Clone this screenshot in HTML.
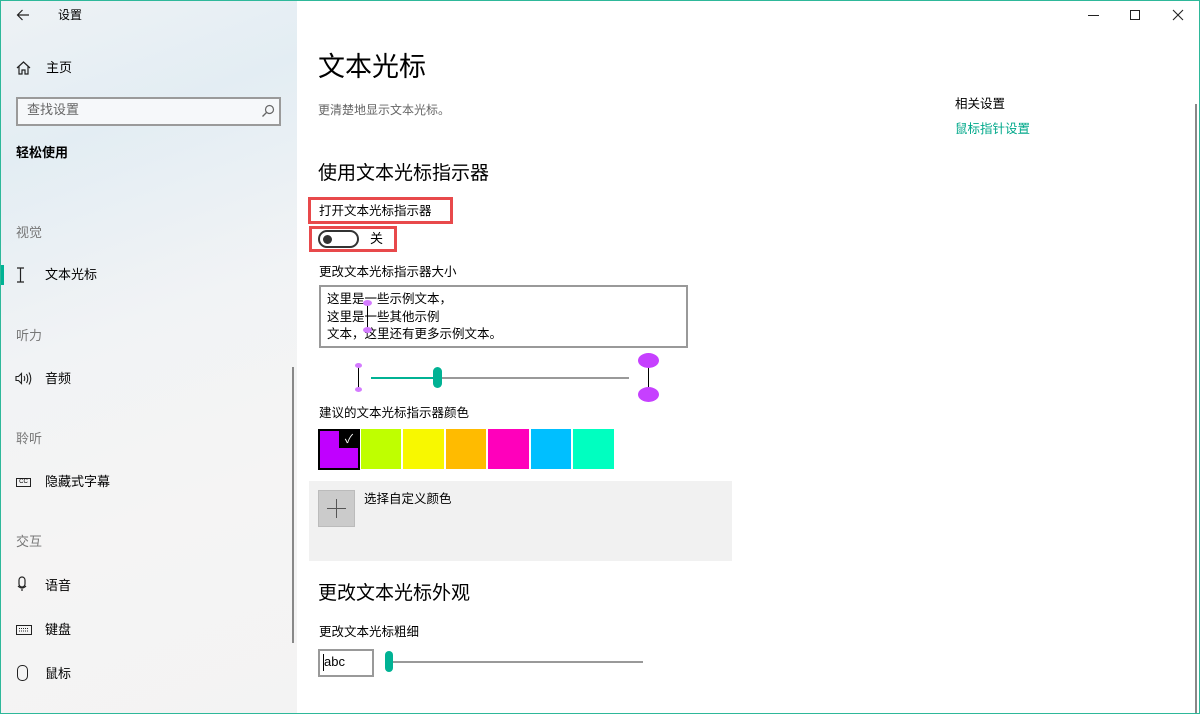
<!DOCTYPE html>
<html><head><meta charset="utf-8"><style>
*{margin:0;padding:0;box-sizing:border-box}
body{width:1200px;height:714px;overflow:hidden;font-family:"Liberation Sans","Noto Sans CJK SC",sans-serif;background:#fff;position:relative;color:#000;line-height:1.15}
.a{position:absolute;white-space:nowrap}
#side{position:absolute;left:0;top:0;width:297px;height:714px;background:linear-gradient(160deg,#eef2f5 0%,#e3edf3 20%,#f1f3f5 45%,#f5f4f4 70%,#f3f3f3 100%)}
.s{font-size:13px}
.g{color:#777;font-size:13px}
.b{border-radius:50%}
</style></head><body>
<div id="side">
<svg class="a" style="left:16px;top:9px" width="14" height="12" viewBox="0 0 14 12"><path d="M13 6H1.5M6.5 1L1.5 6L6.5 11" fill="none" stroke="#222" stroke-width="1.2"/></svg>
<div class="a s" style="left:58px;top:9px;font-size:12px">设置</div>
<svg class="a" style="left:16px;top:61px" width="15" height="14" viewBox="0 0 15 14"><path d="M1 7L7.5 1L14 7M3 5.5V13H6V9H9V13H12V5.5" fill="none" stroke="#222" stroke-width="1.2"/></svg>
<div class="a s" style="left:46px;top:61px">主页</div>
<div class="a" style="left:16px;top:97px;width:265px;height:29px;border:2px solid #9a9a9a;background:#f6f8fa"></div>
<div class="a" style="left:27px;top:103px;font-size:13px;color:#666">查找设置</div>
<svg class="a" style="left:261px;top:104px" width="14" height="14" viewBox="0 0 14 14"><circle cx="8.5" cy="5.5" r="4" fill="none" stroke="#666" stroke-width="1.2"/><path d="M5.5 8.5L1.5 12.5" stroke="#666" stroke-width="1.3"/></svg>
<div class="a s" style="left:16px;top:146px;font-weight:bold">轻松使用</div>
<div class="a g" style="left:16px;top:226px">视觉</div>
<div class="a" style="left:0;top:265px;width:4px;height:20px;background:#00b294"></div>
<svg class="a" style="left:16px;top:267px" width="9" height="16" viewBox="0 0 9 16"><path d="M1 1H8M1 15H8M4.5 1V15" stroke="#222" stroke-width="1.2" fill="none"/></svg>
<div class="a s" style="left:45px;top:268px">文本光标</div>
<div class="a g" style="left:16px;top:329px">听力</div>
<svg class="a" style="left:15px;top:372px" width="17" height="13" viewBox="0 0 17 13"><path d="M1 4.5H3.5L6.5 1.5V11.5L3.5 8.5H1Z" fill="none" stroke="#222" stroke-width="1.1"/><path d="M9 4Q10.5 6.5 9 9M11.5 2Q14 6.5 11.5 11M14 0.5Q17.5 6.5 14 12.5" fill="none" stroke="#222" stroke-width="1.1"/></svg>
<div class="a s" style="left:45px;top:372px">音频</div>
<div class="a g" style="left:16px;top:432px">聆听</div>
<div class="a" style="left:16px;top:478px;width:15px;height:9px;border:1px solid #222;font-size:6px;line-height:7px;text-align:center">CC</div>
<div class="a s" style="left:45px;top:475px">隐藏式字幕</div>
<div class="a g" style="left:16px;top:535px">交互</div>
<svg class="a" style="left:17px;top:576px" width="10" height="16" viewBox="0 0 10 16"><rect x="2" y="1" width="6" height="10" rx="3" fill="none" stroke="#222" stroke-width="1.2"/><path d="M1 10Q5 14 9 10M5 13V15" fill="none" stroke="#222" stroke-width="1.2"/></svg>
<div class="a s" style="left:45px;top:579px">语音</div>
<svg class="a" style="left:16px;top:625px" width="16" height="10" viewBox="0 0 16 10"><rect x="0.5" y="0.5" width="15" height="9" fill="none" stroke="#222"/><path d="M3 3.5H13M3 6H13" stroke="#222" stroke-dasharray="1 1"/></svg>
<div class="a s" style="left:45px;top:623px">键盘</div>
<div class="a" style="left:17px;top:665px;width:11px;height:16px;border:1.3px solid #222;border-radius:5px"></div>
<div class="a s" style="left:45px;top:667px">鼠标</div>
<div class="a" style="left:292px;top:367px;width:2px;height:276px;background:#888"></div>
</div>
<div class="a" style="left:1088px;top:15px;width:11px;height:1px;background:#222"></div>
<div class="a" style="left:1130px;top:10px;width:10px;height:10px;border:1px solid #222"></div>
<svg class="a" style="left:1172px;top:9px" width="12" height="12"><path d="M1 1L11 11M11 1L1 11" stroke="#222" stroke-width="1.1"/></svg>
<div class="a" style="left:1195px;top:104px;width:2px;height:610px;background:#888"></div>
<div class="a" style="left:318px;top:52px;font-size:27px">文本光标</div>
<div class="a" style="left:318px;top:104px;font-size:12px;color:#666">更清楚地显示文本光标。</div>
<div class="a" style="left:318px;top:163px;font-size:19px">使用文本光标指示器</div>
<div class="a" style="left:308px;top:197px;width:145px;height:27px;border:3px solid #e8494b"></div>
<div class="a" style="left:319px;top:204px;font-size:12.5px">打开文本光标指示器</div>
<div class="a" style="left:309px;top:226px;width:88px;height:26px;border:3px solid #e8494b"></div>
<div class="a" style="left:318px;top:230px;width:41px;height:18px;border:2px solid #333;border-radius:10px"></div>
<div class="a b" style="left:323px;top:235px;width:9px;height:9px;background:#333"></div>
<div class="a s" style="left:370px;top:232px">关</div>
<div class="a" style="left:319px;top:265px;font-size:12.5px">更改文本光标指示器大小</div>
<div class="a" style="left:319px;top:285px;width:369px;height:63px;border:2px solid #999"></div>
<div class="a" style="left:327px;top:291px;font-size:12.5px;line-height:17.5px">这里是一些示例文本，<br>这里是一些其他示例<br>文本，这里还有更多示例文本。</div>
<div class="a" style="left:367px;top:303px;width:1px;height:26px;background:#000"></div>
<div class="a b" style="left:363px;top:300px;width:9px;height:6px;background:#d47bff"></div>
<div class="a b" style="left:363px;top:327px;width:9px;height:6px;background:#d47bff"></div>
<div class="a" style="left:358px;top:365px;width:1px;height:25px;background:#000"></div>
<div class="a b" style="left:355px;top:363px;width:7px;height:5px;background:#d47bff"></div>
<div class="a b" style="left:355px;top:387px;width:7px;height:5px;background:#d47bff"></div>
<div class="a" style="left:371px;top:377px;width:66px;height:2px;background:#00b294"></div>
<div class="a" style="left:437px;top:377px;width:192px;height:2px;background:#999"></div>
<div class="a" style="left:433px;top:367px;width:9px;height:21px;border-radius:5px;background:#00b294"></div>
<div class="a" style="left:648px;top:360px;width:1px;height:35px;background:#000"></div>
<div class="a b" style="left:638px;top:353px;width:21px;height:15px;background:#c640ff"></div>
<div class="a b" style="left:638px;top:387px;width:21px;height:15px;background:#c640ff"></div>
<div class="a" style="left:319px;top:406px;font-size:12.5px">建议的文本光标指示器颜色</div>
<div class="a" style="left:318px;top:429px;width:42px;height:41px;border:2px solid #000;background:#c000ff"></div>
<div class="a" style="left:339px;top:430px;width:20px;height:18px;background:#000;color:#fff;font-size:12px;text-align:center;line-height:18px">✓</div>
<div class="a" style="left:361px;top:429px;width:40px;height:40px;background:#bfff00"></div>
<div class="a" style="left:403px;top:429px;width:41px;height:40px;background:#f8f800"></div>
<div class="a" style="left:446px;top:429px;width:40px;height:40px;background:#ffbb00"></div>
<div class="a" style="left:488px;top:429px;width:41px;height:40px;background:#ff00bb"></div>
<div class="a" style="left:531px;top:429px;width:40px;height:40px;background:#00bfff"></div>
<div class="a" style="left:573px;top:429px;width:41px;height:40px;background:#00ffc0"></div>
<div class="a" style="left:309px;top:481px;width:423px;height:80px;background:#f1f1f1"></div>
<div class="a" style="left:318px;top:490px;width:37px;height:37px;background:#cbcbcb;border:1px solid #bbb"></div>
<div class="a" style="left:327px;top:508px;width:19px;height:1px;background:#555"></div>
<div class="a" style="left:336px;top:499px;width:1px;height:19px;background:#555"></div>
<div class="a" style="left:364px;top:492px;font-size:12.5px">选择自定义颜色</div>
<div class="a" style="left:318px;top:583px;font-size:19px">更改文本光标外观</div>
<div class="a" style="left:319px;top:625px;font-size:12.5px">更改文本光标粗细</div>
<div class="a" style="left:318px;top:649px;width:56px;height:28px;border:2px solid #999"></div>
<div class="a" style="left:323px;top:654px;width:1px;height:17px;background:#000"></div>
<div class="a" style="left:324px;top:655px;font-size:13px">abc</div>
<div class="a" style="left:389px;top:661px;width:254px;height:2px;background:#999"></div>
<div class="a" style="left:385px;top:651px;width:8px;height:21px;border-radius:4px;background:#00b294"></div>
<div class="a" style="left:955px;top:97px;font-size:12.5px">相关设置</div>
<div class="a" style="left:955px;top:122px;font-size:12.5px;color:#00a88a">鼠标指针设置</div>
<div class="a" style="left:0;top:0;width:1200px;height:714px;border:1px solid #2eb89a"></div>
</body></html>
